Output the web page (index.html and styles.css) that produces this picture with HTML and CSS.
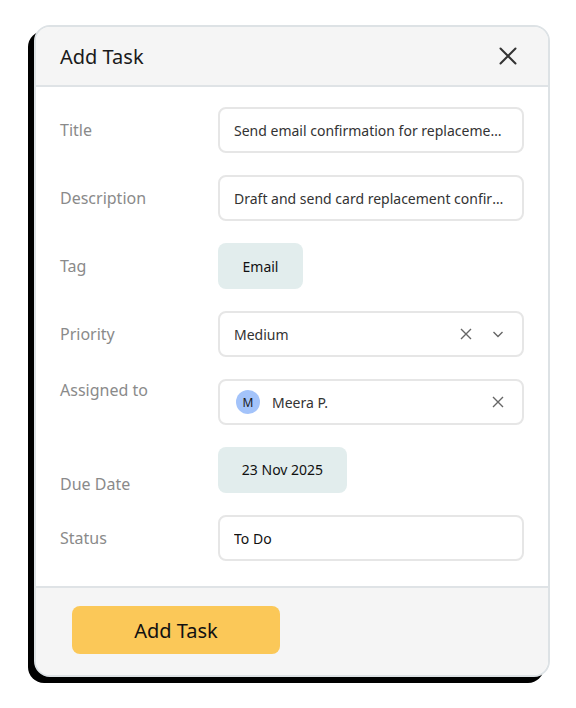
FILE: index.html
```html
<!DOCTYPE html>
<html lang="en">
<head>
    <meta charset="UTF-8">
    <meta name="viewport" content="width=device-width, initial-scale=1.0">
    <title>Add Task</title>
    <link rel="stylesheet" href="styles.css">
</head>
<body>

    <div class="modal">
        <div class="modal-header">
            <h2>Add Task</h2>
            <button class="close-btn" aria-label="Close">
                <svg width="18" height="18" viewBox="0 0 18 18"><path d="M1.5 1.5 L16.5 16.5 M16.5 1.5 L1.5 16.5" stroke="#333" stroke-width="2" stroke-linecap="round"/></svg>
            </button>
        </div>

        <div class="modal-body">
            <div class="row">
                <label>Title</label>
                <div class="field"><span class="value">Send email confirmation for replacement card</span></div>
            </div>
            <div class="row">
                <label>Description</label>
                <div class="field"><span class="value">Draft and send card replacement confirmation to customer</span></div>
            </div>
            <div class="row">
                <label>Tag</label>
                <div class="chip tag-chip">Email</div>
            </div>
            <div class="row">
                <label>Priority</label>
                <div class="field">
                    <span class="value">Medium</span>
                    <span class="icon clear">
                        <svg width="12" height="12" viewBox="0 0 12 12"><path d="M1 1 L11 11 M11 1 L1 11" stroke="#666" stroke-width="1.4"/></svg>
                    </span>
                    <span class="icon">
                        <svg width="12" height="12" viewBox="0 0 12 12"><path d="M1.5 4 L6 8.5 L10.5 4" fill="none" stroke="#666" stroke-width="1.4"/></svg>
                    </span>
                </div>
            </div>
            <div class="row row-top">
                <label>Assigned to</label>
                <div class="field">
                    <span class="avatar">M</span>
                    <span class="value">Meera P.</span>
                    <span class="icon">
                        <svg width="12" height="12" viewBox="0 0 12 12"><path d="M1 1 L11 11 M11 1 L1 11" stroke="#666" stroke-width="1.4"/></svg>
                    </span>
                </div>
            </div>
            <div class="row row-bottom">
                <label>Due Date</label>
                <div class="chip date-chip">23 Nov 2025</div>
            </div>
            <div class="row">
                <label>Status</label>
                <div class="field"><span class="value status">To Do</span></div>
            </div>
        </div>

        <div class="modal-footer">
            <button class="submit-btn">Add Task</button>
        </div>
    </div>

</body>
</html>
```

FILE: styles.css
```css
body {
    font-family: "Noto Sans", "Open Sans", sans-serif;
    background-color: #ffffff;
    margin: 0;
    padding: 25px 26px 31px 34px;
}
.modal {
    width: 516px;
    box-sizing: border-box;
    border: 2px solid #dde2e5;
    border-radius: 16px;
    background-color: #ffffff;
    box-shadow: -6px 6px 0 #000000;
    overflow: hidden;
}
.modal-header {
    display: flex;
    align-items: center;
    justify-content: space-between;
    height: 58px;
    padding: 0 31px 0 24px;
    background-color: #f5f5f5;
    border-bottom: 2px solid #dfe3e6;
}
.modal-header h2 {
    margin: 0;
    font-size: 20px;
    font-weight: 400;
    color: #1a1a1a;
}
.close-btn {
    display: flex;
    padding: 0;
    border: none;
    background: none;
    cursor: pointer;
}
.modal-body {
    display: flex;
    flex-direction: column;
    gap: 22px;
    padding: 20px 24px 25px 24px;
}
.row {
    display: flex;
    align-items: center;
}
.row label {
    width: 158px;
    flex-shrink: 0;
    font-size: 16px;
    color: #8a8a8a;
}
.row-top {
    align-items: flex-start;
}
.row-bottom {
    align-items: flex-end;
}
.row-bottom label {
    margin-bottom: -2px;
}
.field {
    flex: 1;
    display: flex;
    align-items: center;
    gap: 12px;
    height: 46px;
    box-sizing: border-box;
    padding: 0 18px 0 14px;
    border: 2px solid #e6e6e6;
    border-radius: 8px;
    min-width: 0;
}
.value {
    flex: 1;
    font-size: 14px;
    color: #333333;
    white-space: nowrap;
    overflow: hidden;
    text-overflow: ellipsis;
}
.status {
    color: #111111;
}
.icon {
    display: flex;
    width: 12px;
    justify-content: center;
}
.clear {
    margin-right: 8px;
}
.avatar {
    display: flex;
    align-items: center;
    justify-content: center;
    width: 24px;
    height: 24px;
    margin-left: 2px;
    border-radius: 50%;
    background-color: #a3c3fa;
    font-size: 12px;
    color: #1a1a1a;
}
.chip {
    display: flex;
    align-items: center;
    justify-content: center;
    height: 46px;
    border-radius: 8px;
    background-color: #e2eded;
    font-size: 14px;
    color: #111111;
}
.tag-chip {
    width: 85px;
}
.date-chip {
    width: 129px;
    padding-bottom: 1px;
    box-sizing: border-box;
}
.modal-footer {
    height: 89px;
    padding: 18px 36px 0 36px;
    box-sizing: border-box;
    background-color: #f5f5f5;
    border-top: 2px solid #dfe3e6;
}
.submit-btn {
    width: 208px;
    height: 48px;
    border: none;
    border-radius: 8px;
    background-color: #fbc858;
    font-family: inherit;
    font-size: 20px;
    color: #111111;
    cursor: pointer;
}
```
